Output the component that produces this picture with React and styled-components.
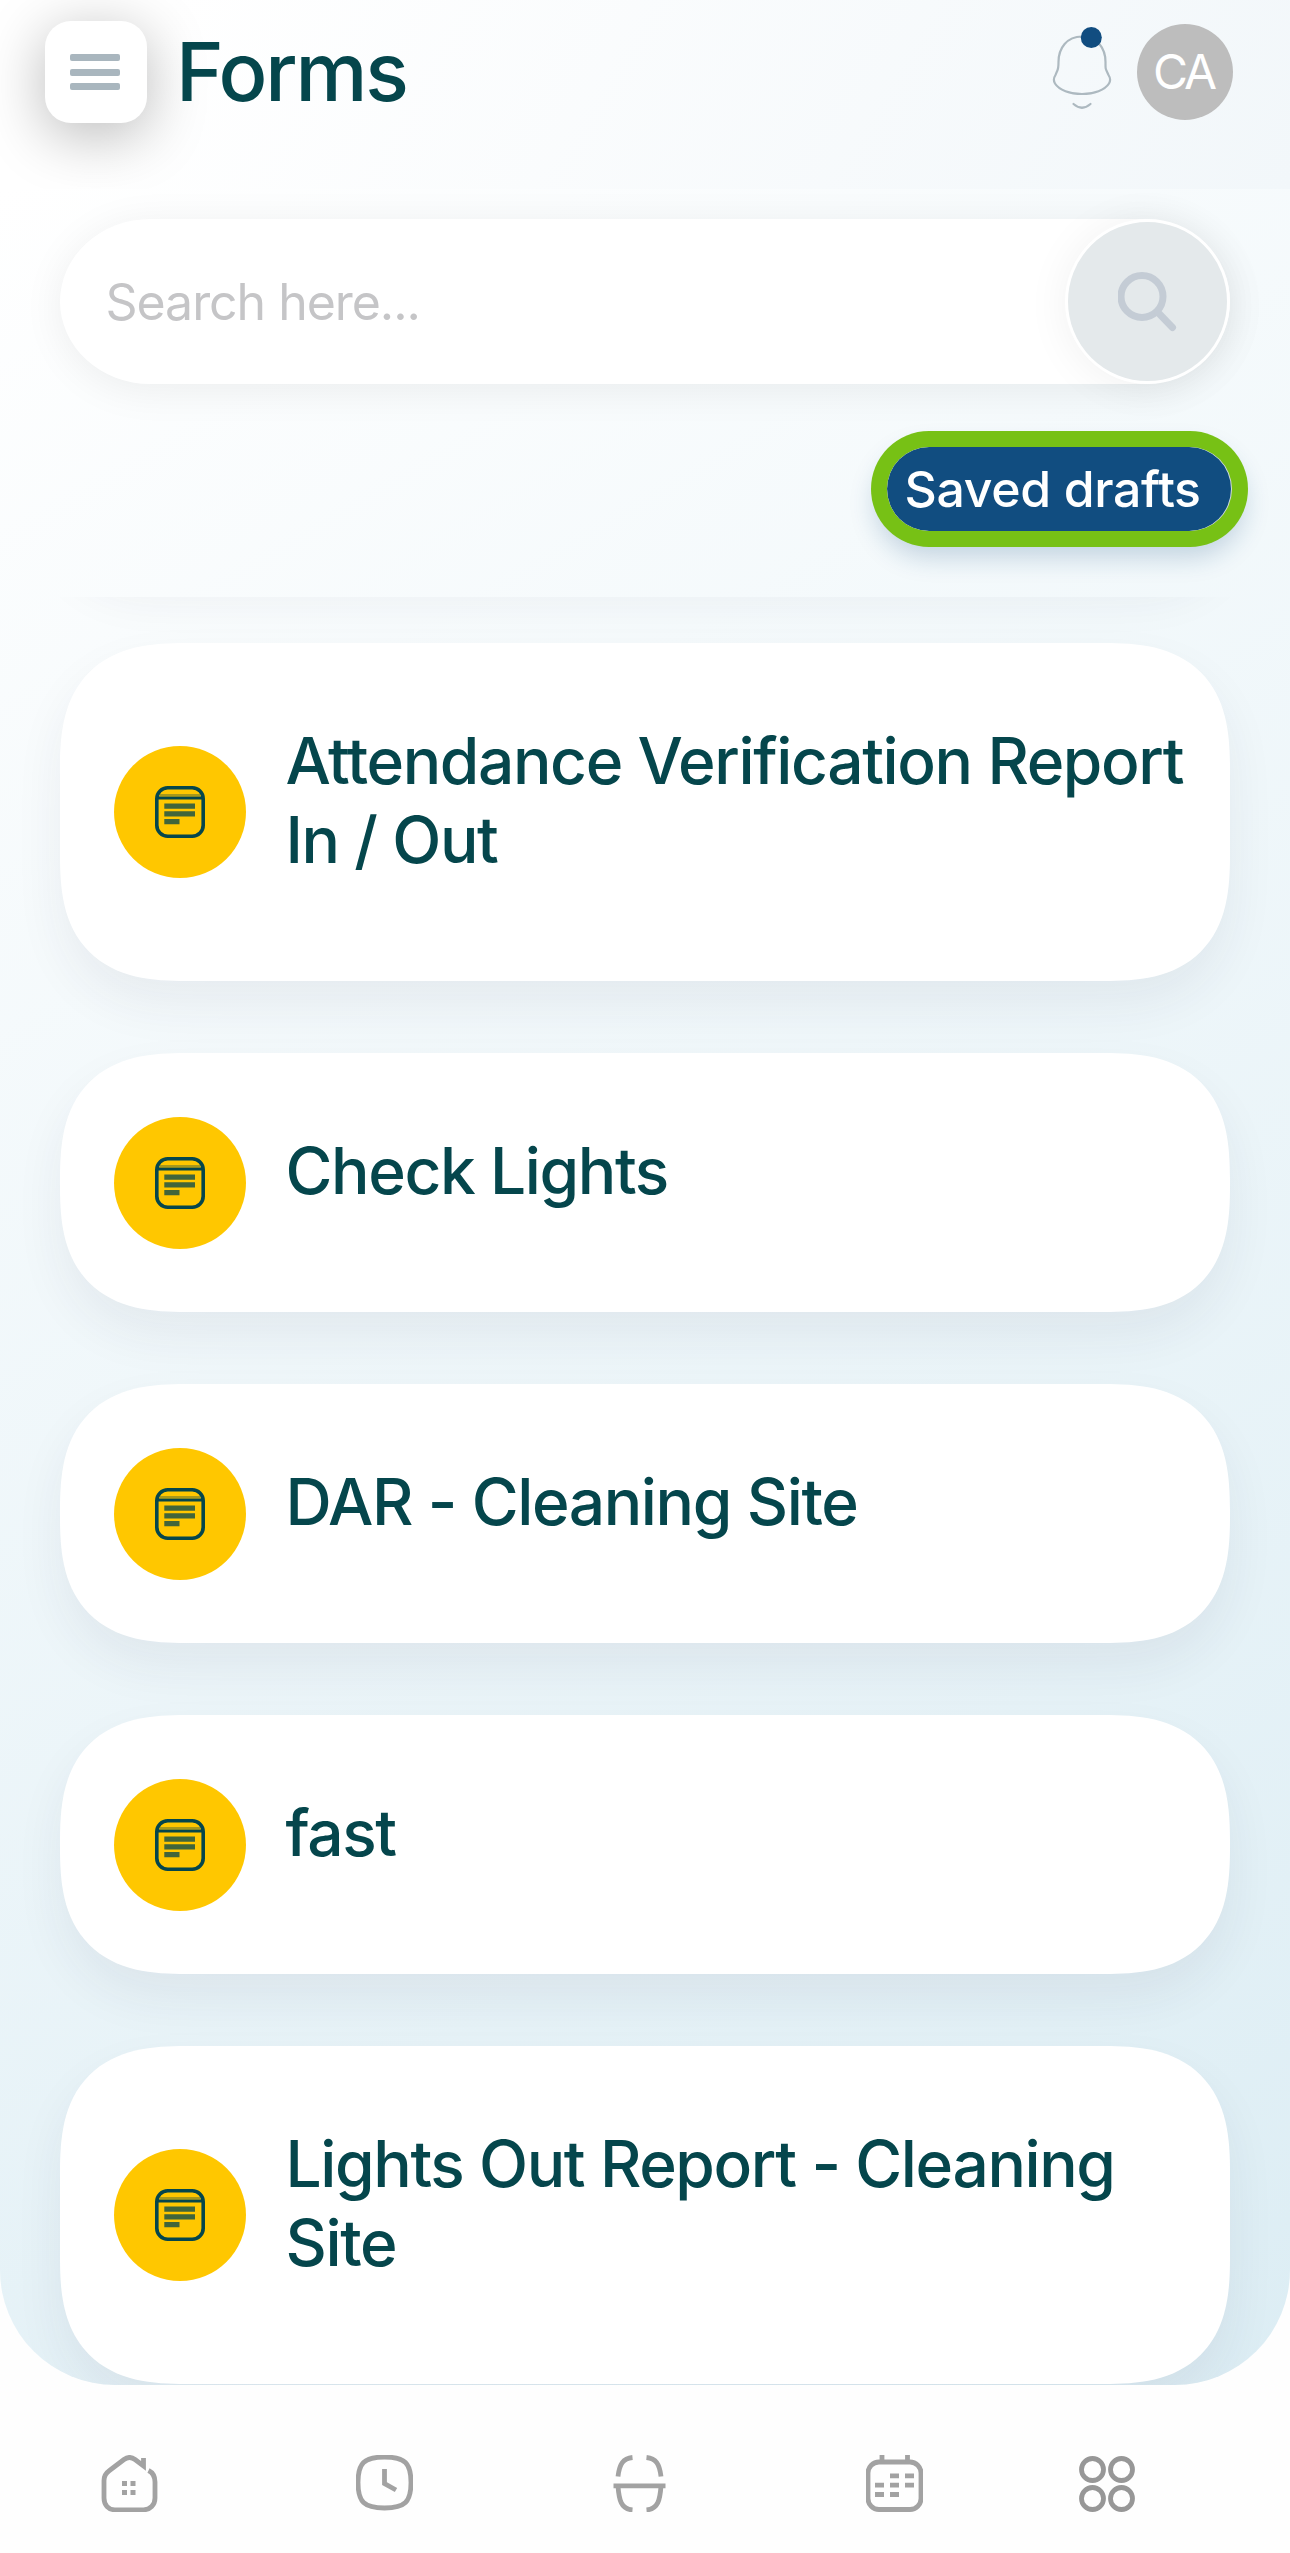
import React from "react";
import styled, { createGlobalStyle } from "styled-components";

const GlobalStyle = createGlobalStyle`
  *, *::before, *::after { box-sizing: border-box; }
  body {
    margin: 0;
    background: #fefefe;
    font-family: Inter, "Liberation Sans", sans-serif;
    -webkit-font-smoothing: antialiased;
  }
  button { font: inherit; border: 0; padding: 0; }
`;

const Screen = styled.div`
  width: 1290px;
  height: 2553px;
  overflow: hidden;
  display: flex;
  flex-direction: column;
  background: #fefefe;
`;

const Header = styled.header`
  height: 189px;
  flex: none;
  display: flex;
  align-items: flex-start;
  padding: 21px 57px 0 45px;
  background: linear-gradient(120deg, #ffffff 12%, #f2f7fa);
`;

const MenuButton = styled.button`
  width: 102px;
  height: 102px;
  display: flex;
  flex-direction: column;
  align-items: center;
  justify-content: center;
  gap: 7.5px;
  border-radius: 26px;
  background: #fff;
  box-shadow: 0 12px 60px rgba(0, 0, 0, 0.28);
`;

const MenuBar = styled.span`
  width: 50px;
  height: 7px;
  margin-right: 2px;
  border-radius: 2px;
  background: #a9b6be;
`;

const Title = styled.h1`
  flex: 1;
  margin: 0 0 0 29px;
  font-size: 81px;
  line-height: 102px;
  font-weight: 530;
  letter-spacing: -2.2px;
  color: #05464c;
`;

const Bell = styled.svg`
  width: 60px;
  height: 90px;
  margin: 3px 25.5px 0 0;
`;

const Avatar = styled.div`
  width: 96px;
  height: 96px;
  margin-top: 3px;
  border-radius: 50%;
  background: #bdbdbd;
  color: #fff;
  font-size: 48px;
  font-weight: 400;
  line-height: 95px;
  letter-spacing: -3px;
  text-align: center;
  padding-right: 3px;
`;

const Panel = styled.main`
  height: 2196px;
  flex: none;
  display: flex;
  flex-direction: column;
  overflow: hidden;
  border-radius: 0 0 115px 115px;
  background: linear-gradient(149.6deg, #ffffff, #dcedf4);
`;

const Toolbar = styled.div`
  height: 408px;
  flex: none;
  display: flex;
  flex-direction: column;
  padding: 30px 42px 0 60px;
`;

const SearchBox = styled.div`
  width: 1170px;
  height: 165px;
  flex: none;
  display: flex;
  align-items: center;
  justify-content: space-between;
  padding-left: 45.5px;
  border-radius: 90px / 82.5px;
  background: #fff;
  box-shadow: 0 6px 42px rgba(0, 0, 0, 0.065);
`;

const Placeholder = styled.span`
  font-size: 50px;
  line-height: 60px;
  letter-spacing: -1.05px;
  color: #c5c5c7;
`;

const SearchButton = styled.button`
  width: 165px;
  height: 165px;
  display: flex;
  align-items: center;
  justify-content: center;
  border: 3px solid #fff;
  border-radius: 50%;
  background: #e4e9eb;
  box-shadow: 0 3px 44px rgba(0, 0, 0, 0.06);
`;

const DraftsFrame = styled.div`
  width: 377px;
  height: 116px;
  margin-top: 47px;
  align-self: flex-end;
  padding: 16px;
  border-radius: 58px;
  background: #77c115;
  box-shadow: 0 14px 26px -4px rgba(16, 77, 128, 0.22);
`;

const DraftsClip = styled.div`
  height: 84px;
  overflow: hidden;
  border-radius: 42px;
  background: #d3dbe5;
`;

const DraftsButton = styled.button`
  display: block;
  width: 343.5px;
  height: 84px;
  padding-left: 17.5px;
  border-radius: 42px;
  background: #114d80;
  color: #fff;
  font-size: 50px;
  font-weight: 450;
  line-height: 85px;
  letter-spacing: -0.35px;
  text-align: left;
  white-space: nowrap;
`;

const List = styled.div`
  flex: 1;
  min-height: 0;
  overflow: hidden;
  display: flex;
  flex-direction: column;
  gap: 72px;
  padding: 0 60px;
`;

const Card = styled.article`
  flex: none;
  display: flex;
  align-items: center;
  padding: 0 20px 0 54px;
  border-radius: 100px;
  background: #fff;
  box-shadow: 0 24px 50px rgba(40, 50, 75, 0.068);

  @supports (corner-shape: superellipse(1.39)) {
    border-radius: 126px;
    corner-shape: superellipse(1.39);
  }
`;

const ScrolledCard = styled(Card)`
  height: 200px;
  margin-top: -226px;
`;

const Badge = styled.div`
  width: 132px;
  height: 132px;
  flex: none;
  display: flex;
  align-items: center;
  justify-content: center;
  border-radius: 50%;
  background: #ffc700;
`;

const CardTitle = styled.h2`
  margin: 0 0 0 39.5px;
  padding: 78px 0 102px;
  font-size: 64px;
  line-height: 79px;
  font-weight: 520;
  letter-spacing: -1.38px;
  color: #05464c;
  white-space: pre;
`;

const NavBar = styled.nav`
  flex: 1;
  display: flex;
  padding: 70px 0 0 2.6px;
`;

const NavItem = styled.a`
  width: ${(p) => p.$width}px;
  display: flex;
  justify-content: center;
  align-items: flex-start;
`;

const NavSvg = styled.svg`
  width: 57px;
  height: 57px;
  overflow: hidden;
  fill: none;
  stroke: ${(p) => p.$tone || "#a2a2a2"};
  stroke-width: 4.8;
`;

const FormIcon = () => (
  <svg width="50" height="52" viewBox="0 0 50 52" fill="none" stroke="#05464c">
    <rect x="1.8" y="1.8" width="46.4" height="48.4" rx="11" strokeWidth="3.6" />
    <path d="M2 12H48" strokeWidth="3" />
    <path d="M5 9H45" strokeWidth="2" opacity=".35" />
    <path d="M9.300 20.200H40M9.300 27.900H40M9.300 35.600H24.500" strokeWidth="5.300" opacity=".76" />
  </svg>
);

const BellIcon = () => (
  <Bell viewBox="0 0 60 90" fill="none" stroke="#adb9c0" strokeWidth="2.2" strokeLinecap="round">
    <path d="M30 12.5C15 12.5 6.500 24 6.500 38C6.500 47 6 44 3.500 51C1.500 54 1.500 57 3 59.500C7 66 18 70 30 70C42 70 53 66 57 59.500C58.500 57 58.500 54 56.500 51C53.500 44 53.500 47 53.500 38C53.500 24 45 12.500 30 12.500Z" />
    <path d="M21.500 80Q30 87.500 38.500 80" />
    <circle cx="39.300" cy="13.500" r="10.500" fill="#114d80" stroke="none" />
  </Bell>
);

const SearchIcon = () => (
  <svg width="60" height="60" viewBox="0 0 60 60" fill="none" stroke="#c4ccd5" strokeWidth="7" strokeLinecap="round">
    <circle cx="24" cy="24.500" r="21" />
    <path d="M40 40.500L54.500 55.500" />
  </svg>
);

const HomeIcon = () => (
  <NavSvg viewBox="0 0 57 57">
    <path d="M47.5 15.500C52.500 18 54 22 54 27V43C54 50 49 54.800 42.500 54.800H14C7.500 54.800 3 50 3 43V25.500C3 21 5 18 8.500 15.500L23 4.500C27 1.500 30 1.500 34 4.500L42.500 11V3" />
    <path d="M21 28.500H26M29.500 28.500H34.500M21 37.500H26M29.500 37.500H34.500" strokeWidth="5" />
  </NavSvg>
);

const ClockIcon = () => (
  <NavSvg viewBox="0 0 57 57">
    <path d="M28.500 2C49 2 55 8 55 27.500C55 47 49 53 28.500 53C8 53 2 47 2 27.500C2 8 8 2 28.500 2Z" />
    <path d="M28.500 14V28.500L40 35" />
  </NavSvg>
);

const ScanIcon = () => (
  <NavSvg viewBox="0 0 57 57">
    <path d="M21.500 2.500C12 3.500 8.500 9 7 21.500M35.500 2.500C45 3.500 48.500 9 50 21.500M7 31C8 45 10 54 21.500 55M50 31C49 45 47 54 35.500 55" />
    <path d="M2.500 30.800H54.500" />
  </NavSvg>
);

const CalendarIcon = () => (
  <NavSvg viewBox="0 0 57 57">
    <rect x="2" y="7" width="53" height="47.500" rx="11" />
    <path d="M16 0V7M41.500 0V7" />
    <path d="M24 20.800H33M39 20.800H48M9 30.200H18M24 30.200H33M39 30.200H48M9 39.500H18M24 39.500H33" />
  </NavSvg>
);

const AppsIcon = () => (
  <NavSvg viewBox="0 0 57 57" $tone="#979797">
    <circle cx="14.500" cy="14.500" r="11" />
    <circle cx="43.500" cy="14.500" r="11" />
    <circle cx="14.500" cy="43.500" r="11" />
    <circle cx="43.500" cy="43.500" r="11" />
  </NavSvg>
);

const forms = [
  "Attendance Verification Report\nIn / Out",
  "Check Lights",
  "DAR - Cleaning Site",
  "fast",
  "Lights Out Report - Cleaning\nSite",
];

const tabs = [
  { Icon: HomeIcon, width: 254.7 },
  { Icon: ClockIcon, width: 254.7 },
  { Icon: ScanIcon, width: 254.7 },
  { Icon: CalendarIcon, width: 254.7 },
  { Icon: AppsIcon, width: 171 },
];

export default function App() {
  return (
    <Screen>
      <GlobalStyle />
      <Header>
        <MenuButton>
          <MenuBar />
          <MenuBar />
          <MenuBar />
        </MenuButton>
        <Title>Forms</Title>
        <BellIcon />
        <Avatar>CA</Avatar>
      </Header>
      <Panel>
        <Toolbar>
          <SearchBox>
            <Placeholder>Search here...</Placeholder>
            <SearchButton>
              <SearchIcon />
            </SearchButton>
          </SearchBox>
          <DraftsFrame>
            <DraftsClip>
              <DraftsButton>Saved drafts</DraftsButton>
            </DraftsClip>
          </DraftsFrame>
        </Toolbar>
        <List>
          <ScrolledCard />
          {forms.map((name) => (
            <Card key={name}>
              <Badge>
                <FormIcon />
              </Badge>
              <CardTitle>{name}</CardTitle>
            </Card>
          ))}
        </List>
      </Panel>
      <NavBar>
        {tabs.map(({ Icon, width }, i) => (
          <NavItem key={i} $width={width}>
            <Icon />
          </NavItem>
        ))}
      </NavBar>
    </Screen>
  );
}
